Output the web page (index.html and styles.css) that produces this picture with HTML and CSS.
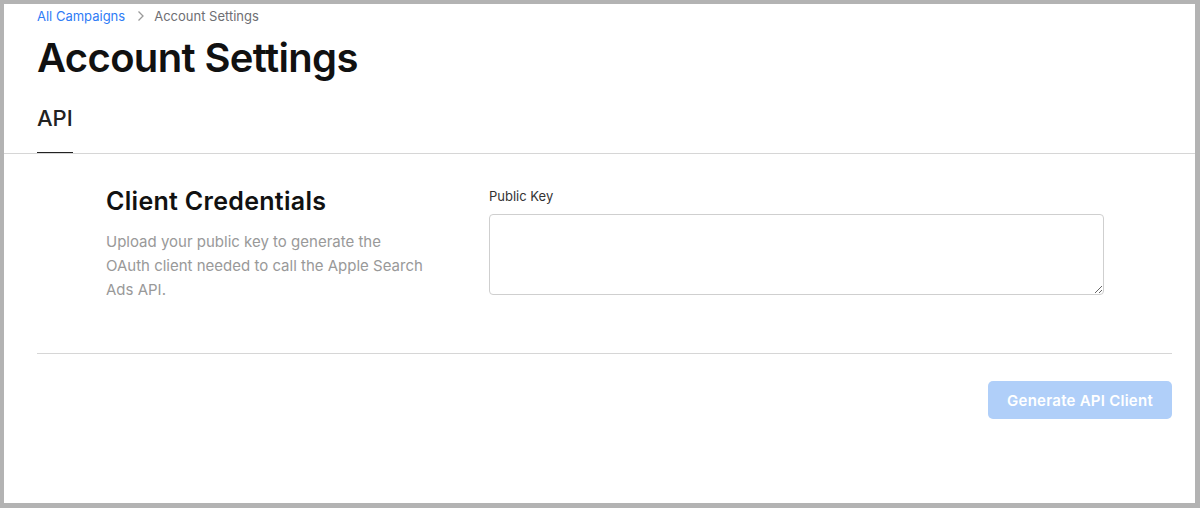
FILE: index.html
```html
<!DOCTYPE html>
<html lang="en">
<head>
<meta charset="utf-8">
<title>Account Settings</title>
<link rel="stylesheet" href="styles.css">
</head>
<body>
<div class="frame">
  <div class="panel">
    <header class="head">
      <nav class="crumbs">
        <a class="crumb-link" href="#">All Campaigns</a>
        <svg class="chev" width="8" height="12" viewBox="0 0 8 12"><path d="M1.5 1.5 L6 6 L1.5 10.5" fill="none" stroke="#9a9a9a" stroke-width="1.3"/></svg>
        <span class="crumb-current">Account Settings</span>
      </nav>
      <h1 class="title">Account Settings</h1>
      <div class="tabs">
        <span class="tab active">API</span>
      </div>
    </header>
    <div class="rule"></div>
    <main class="content">
      <section class="cred">
        <div class="cred-info">
          <h2 class="cred-title">Client Credentials</h2>
          <p class="cred-desc">Upload your public key to generate the OAuth client needed to call the Apple Search Ads API.</p>
        </div>
        <div class="cred-form">
          <label class="field-label" for="pk">Public Key</label>
          <textarea id="pk" class="field"></textarea>
        </div>
      </section>
      <div class="sep"></div>
      <div class="actions">
        <button class="btn" disabled>Generate API Client</button>
      </div>
    </main>
  </div>
</div>
</body>
</html>
```
FILE: styles.css
```css
* { box-sizing: border-box; }
html, body { margin: 0; padding: 0; }
body {
  background: #b3b3b3;
  font-family: Inter, "Noto Sans", "Liberation Sans", sans-serif;
  color: #1d1d1f;
}
.frame {
  width: 1200px;
  height: 508px;
  padding: 4px 5px 5px 4px;
}
.panel {
  background: #fff;
  height: 100%;
  display: flex;
  flex-direction: column;
}
.head {
  padding: 3px 23px 0 33px;
}
.crumbs {
  display: flex;
  align-items: center;
  gap: 10px;
  height: 18px;
  font-size: 13px;
  line-height: 18px;
}
.crumb-link { color: #2f7cf6; text-decoration: none; }
.crumb-current { color: #6e6e73; }
.chev { display: block; margin: 0 -1px 0 2px; }
.title {
  margin: 8px 0 0;
  font-size: 40px;
  line-height: 50px;
  font-weight: 600;
  letter-spacing: -0.65px;
  color: #111;
}
.tabs {
  display: flex;
  margin-top: 21px;
}
.tab {
  font-size: 22px;
  line-height: 28px;
  font-weight: 500;
  color: #222;
  padding-bottom: 20px;
  border-bottom: 2px solid transparent;
}
.tab.active { border-bottom-color: #222; }
.rule {
  height: 1px;
  background: #d6d6d6;
  margin-top: -1px;
}
.content {
  padding: 0 23px 0 33px;
}
.cred {
  display: flex;
  padding: 31px 0 0 69px;
  height: 199px;
}
.cred-info { width: 383px; }
.cred-title {
  margin: 0;
  font-size: 25px;
  line-height: 32px;
  font-weight: 600;
  letter-spacing: 0.3px;
  color: #111;
}
.cred-desc {
  margin: 13px 0 0;
  font-size: 15px;
  line-height: 24px;
  color: #999;
  width: 322px;
}
.cred-form {
  width: 615px;
  padding-top: 2px;
}
.field-label {
  display: block;
  font-size: 13px;
  line-height: 18px;
  color: #333;
}
.field {
  display: block;
  margin-top: 9px;
  width: 615px;
  height: 81px;
  border: 1px solid #cfcfcf;
  border-radius: 4px;
  resize: vertical;
  font: inherit;
}
.sep {
  height: 1px;
  background: #d6d6d6;
}
.actions {
  display: flex;
  justify-content: flex-end;
  padding-top: 27px;
}
.btn {
  width: 184px;
  height: 38px;
  border: 0;
  border-radius: 5px;
  background: #b0cff9;
  color: #fff;
  font: inherit;
  font-size: 15px;
  font-weight: 600;
  letter-spacing: 0.25px;
}
```
